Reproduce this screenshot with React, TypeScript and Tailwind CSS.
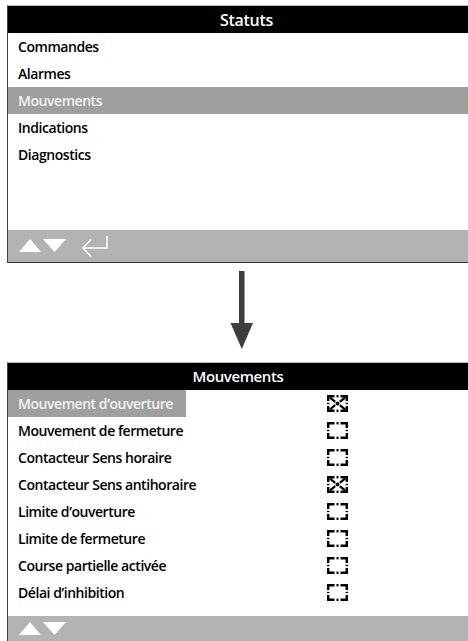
import React from "react";

const font = { fontFamily: '"Open Sans", "Liberation Sans", sans-serif' };

function NavArrows() {
  return (
    <svg width="50" height="14" viewBox="0 0 50 14" className="block">
      <polygon points="0,13 11,0 22,13" fill="white" />
      <polygon points="24,0 47,0 35.5,13" fill="white" />
    </svg>
  );
}

function EnterIcon() {
  return (
    <svg width="28" height="22" viewBox="0 0 28 22" className="block">
      <path d="M26 1 V13 H3" stroke="white" strokeWidth="1.6" fill="none" />
      <path d="M10 4.5 L2 13 L10 21.5" stroke="white" strokeWidth="1.6" fill="none" />
    </svg>
  );
}

function Checkbox({ checked }: { checked: boolean }) {
  return (
    <svg width="21" height="17" viewBox="0 0 21 17" className="block">
      <g stroke="black" strokeWidth="2.4" fill="none">
        <path d="M1.2 6 V1.2 H7.5" />
        <path d="M13.5 1.2 H19.8 V6" />
        <path d="M1.2 11 V15.8 H7.5" />
        <path d="M13.5 15.8 H19.8 V11" />
        <path d="M9.5 1.2 H11.5" />
        <path d="M9.5 15.8 H11.5" />
        <path d="M1.2 7.8 V9.2" />
        <path d="M19.8 7.8 V9.2" />
      </g>
      {checked && (
        <g stroke="black" strokeWidth="2.2" fill="black">
          <path d="M3 2.6 L8.2 6.8" />
          <path d="M18 2.6 L12.8 6.8" />
          <path d="M3 14.4 L8.2 10.2" />
          <path d="M18 14.4 L12.8 10.2" />
          <circle cx="10.5" cy="8.5" r="2" stroke="none" />
        </g>
      )}
    </svg>
  );
}

const statuts = ["Commandes", "Alarmes", "Mouvements", "Indications", "Diagnostics"];

const mouvements: [string, boolean][] = [
  ["Mouvement d\u2019ouverture", true],
  ["Mouvement de fermeture", false],
  ["Contacteur Sens horaire", false],
  ["Contacteur Sens antihoraire", true],
  ["Limite d\u2019ouverture", false],
  ["Limite de fermeture", false],
  ["Course partielle activ\u00e9e", false],
  ["D\u00e9lai d\u2019inhibition", false],
];

export default function App() {
  return (
    <div className="w-[468px] h-[641px] overflow-hidden bg-white" style={font}>
      {/* Statuts menu */}
      <div className="mt-[5px] ml-[7px] w-[478px] border-l border-t border-b border-l-[#444] border-t-[#bbb] border-b-[#333] flex flex-col">
        <div className="h-[27px] bg-black text-white font-semibold text-[16px] tracking-[-0.3px] flex items-center justify-center">
          Statuts
        </div>
        <div className="h-[197px] flex flex-col">
          {statuts.map((s) => (
            <div
              key={s}
              className={
                s === "Mouvements"
                  ? "h-[27px] flex items-center pl-[10px] text-[14px] tracking-[-0.45px] font-semibold bg-[#9f9f9d] text-[#f2f2f2]"
                  : "h-[27px] flex items-center pl-[10px] text-[14px] tracking-[-0.45px] font-semibold text-black"
              }
            >
              {s}
            </div>
          ))}
        </div>
        <div className="h-[32px] bg-[#b3b3b3] flex items-center pl-[11px] gap-[12px]">
          <NavArrows />
          <EnterIcon />
        </div>
      </div>

      {/* arrow */}
      <div className="h-[99px] flex justify-start pl-[230px]">
        <svg width="24" height="90" viewBox="0 0 24 90" className="mt-[8px] block">
          <rect x="9" y="0" width="5.5" height="56" fill="#3d3d3d" />
          <polygon points="0.5,52 23,52 11.8,78" fill="#3d3d3d" />
        </svg>
      </div>

      {/* Mouvements */}
      <div className="ml-[7px] w-[461px] border-l border-t border-l-[#444] border-t-[#bbb] flex flex-col">
        <div className="h-[27px] bg-black text-white font-semibold text-[15px] tracking-[-0.4px] flex items-center justify-center">
          Mouvements
        </div>
        <div className="flex flex-col">
          {mouvements.map(([label, checked], i) => (
            <div key={label} className="h-[27px] flex items-center">
              <div
                className={
                  i === 0
                    ? "w-[178px] h-full flex items-center pl-[10px] text-[14px] tracking-[-0.45px] font-semibold bg-[#9f9f9d] text-[#f2f2f2] whitespace-nowrap"
                    : "w-[178px] h-full flex items-center pl-[10px] text-[14px] tracking-[-0.45px] font-semibold text-black whitespace-nowrap"
                }
              >
                {label}
              </div>
              <div className="ml-[141px]">
                <Checkbox checked={checked} />
              </div>
            </div>
          ))}
        </div>
        <div className="h-[10px]" />
        <div className="h-[30px] bg-[#b3b3b3] flex items-start pt-[6px] pl-[11px]">
          <NavArrows />
        </div>
      </div>
    </div>
  );
}
